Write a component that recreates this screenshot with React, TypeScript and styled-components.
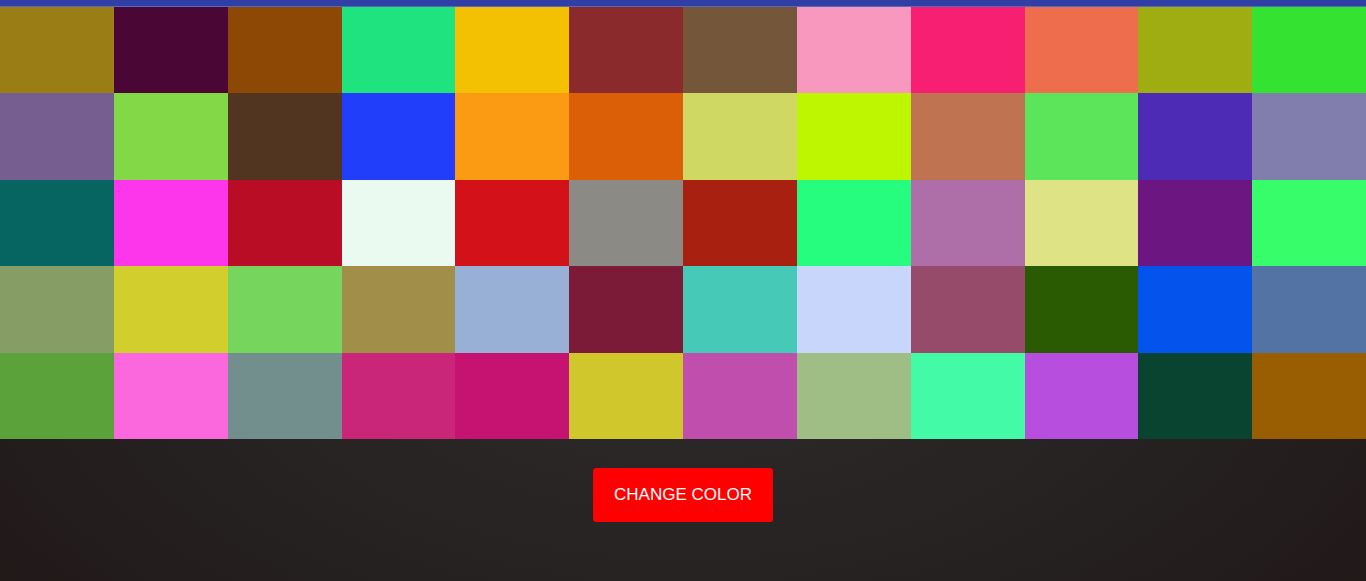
import React, { useState } from "react";
import styled, { createGlobalStyle } from "styled-components";

const GlobalStyle = createGlobalStyle`
  html, body {
    margin: 0;
    padding: 0;
  }
  body {
    min-height: 581px;
    background: radial-gradient(ellipse at 50% 60%, #2c2a29 0%, #262222 50%, #1f1514 100%);
    font-family: "Liberation Sans", Arial, sans-serif;
  }
`;

const Page = styled.div`
  display: flex;
  flex-direction: column;
  min-height: 581px;
`;

const TopBar = styled.div`
  height: 6px;
  background: #303fa6;
  border-bottom: 1px solid #5a68bc;
`;

const Grid = styled.div`
  display: grid;
  grid-template-columns: repeat(12, 1fr);
  grid-auto-rows: 86.4px;
`;

const Cell = styled.div<{ $color: string }>`
  background: ${(p) => p.$color};
`;

const Controls = styled.div`
  display: flex;
  justify-content: center;
  padding-top: 29px;
`;

const Button = styled.button`
  height: 54px;
  padding: 0 21px;
  border: none;
  border-radius: 3px;
  background: #ff0000;
  color: #ffffff;
  font-family: "Liberation Sans", Arial, sans-serif;
  font-size: 17px;
  text-transform: uppercase;
  cursor: pointer;
`;

const initial = [
  "#9b7d16", "#4a0736", "#8d4806", "#1fe37e", "#f3c002", "#8b2a2d", "#74573b", "#f998bf", "#f61f71", "#ee6d4c", "#a0ad12", "#34e232",
  "#775e90", "#82d846", "#523520", "#213ffb", "#fb9b13", "#da5f06", "#d0d864", "#bdf600", "#c07350", "#5ce55a", "#4e2bb4", "#817dac",
  "#066461", "#fd36eb", "#b90d25", "#eafaf0", "#d21118", "#8b8a84", "#a8200f", "#26fd7e", "#ae6fa8", "#dee486", "#6c1681", "#38fd6b",
  "#879d66", "#d2ce2e", "#76d55c", "#a18e48", "#98b0d6", "#7b1b37", "#47c9b8", "#c8d6fb", "#974b6b", "#2a5b02", "#0353ec", "#5273a4",
  "#5ba23a", "#fb68de", "#728f8d", "#c9267a", "#c61270", "#cfc72c", "#c04eac", "#9ebe85", "#43fba6", "#b84ede", "#084430", "#985e01",
];

const randomColor = () =>
  "#" + Math.floor(Math.random() * 0xffffff).toString(16).padStart(6, "0");

export default function App() {
  const [colors, setColors] = useState<string[]>(initial);
  return (
    <Page>
      <GlobalStyle />
      <TopBar />
      <Grid>
        {colors.map((c, i) => (
          <Cell key={i} $color={c} />
        ))}
      </Grid>
      <Controls>
        <Button onClick={() => setColors(colors.map(() => randomColor()))}>
          Change Color
        </Button>
      </Controls>
    </Page>
  );
}
